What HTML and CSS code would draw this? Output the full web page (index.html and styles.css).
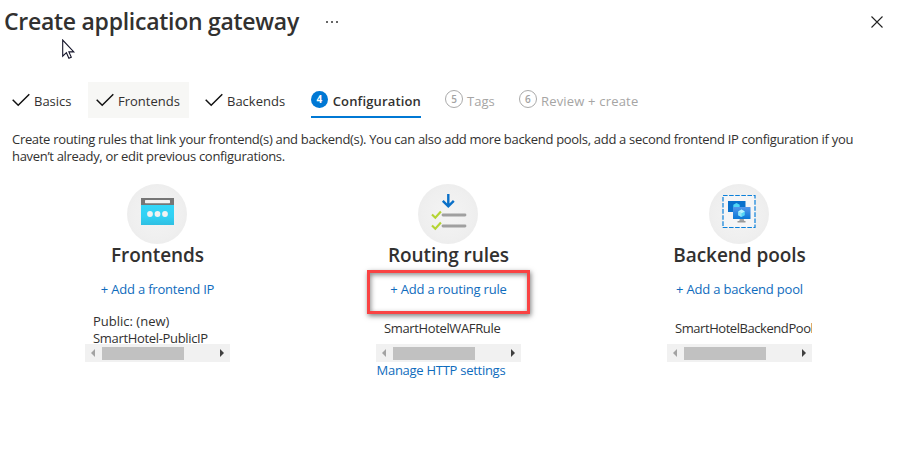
FILE: index.html
```
<!DOCTYPE html>
<html lang="en">
<head>
<meta charset="utf-8">
<title>Create application gateway</title>
<link rel="stylesheet" href="styles.css">
</head>
<body>
<header class="header">
  <h1 class="title">Create application gateway</h1>
  <span class="more"><i></i><i></i><i></i></span>
  <svg class="close" width="12" height="12" viewBox="0 0 12 12"><path d="M.5.5l11 11M11.5.5l-11 11" stroke="#222" stroke-width="1.1"/></svg>
</header>
<svg class="cursor" width="14" height="21" viewBox="0 0 14 21"><path d="M.7 1v16.2l3.7-3.5 2.5 5.6 2.4-1.1-2.4-5.3h4.9z" fill="#fff" stroke="#15152a" stroke-width="1.1"/></svg>

<nav class="tabs">
  <div class="tab basics"><svg class="check" width="18" height="14" viewBox="0 0 18 14"><path d="M.7 6.8l5.5 5.5L17.3 1.2" /></svg><span>Basics</span></div>
  <div class="tab hovered"><svg class="check" width="18" height="14" viewBox="0 0 18 14"><path d="M.7 6.8l5.5 5.5L17.3 1.2" /></svg><span>Frontends</span></div>
  <div class="tab backends"><svg class="check" width="18" height="14" viewBox="0 0 18 14"><path d="M.7 6.8l5.5 5.5L17.3 1.2" /></svg><span>Backends</span></div>
  <div class="tab active"><b class="num">4</b><span class="label">Configuration</span></div>
  <div class="tab pending tags"><b class="num">5</b><span>Tags</span></div>
  <div class="tab pending review"><b class="num">6</b><span class="label">Review + create</span></div>
</nav>

<p class="intro">Create routing rules that link your frontend(s) and backend(s). You can also add more backend pools, add a second frontend IP configuration if you<br>haven’t already, or edit previous configurations.</p>

<main class="columns">
  <section class="column">
    <div class="disc">
      <svg width="60" height="60" viewBox="0 0 60 60">
        <defs><linearGradient id="cyan" x1="0" y1="0" x2="0" y2="1"><stop offset="0" stop-color="#33d6f8"/><stop offset=".6" stop-color="#32d0f3"/><stop offset="1" stop-color="#2fbfe2"/></linearGradient></defs>
        <path d="M14 14h33v7H14z" fill="#767676"/><path d="M14 21h33v20H14z" fill="url(#cyan)"/>
        <rect x="18" y="16" width="25" height="3.2" rx=".6" fill="#f2f2f2"/>
        <g fill="#f2f2f2"><circle cx="23" cy="30" r="2.9"/><circle cx="30.5" cy="30" r="2.9"/><circle cx="38" cy="30" r="2.9"/></g>
      </svg>
    </div>
    <h2 class="heading">Frontends</h2>
    <a class="link">+ Add a frontend IP</a>
    <div class="items two"><span>Public: (new)</span><span class="ip">SmartHotel-PublicIP</span></div>
    <div class="scrollbar"><i class="left"></i><i class="thumb"></i><i class="right"></i></div>
  </section>
  <section class="column">
    <div class="disc">
      <svg width="60" height="60" viewBox="0 0 60 60" fill="none">
        <path d="M30.3 10v12M24.8 16.8l5.5 5.5 5.5-5.5" stroke="#0a70c8" stroke-width="2.4"/>
        <path d="M25 31h22M25 42h22" stroke="#a0a0a0" stroke-width="2.8" stroke-linecap="round"/>
        <path d="M14 30.5l3.3 3.3 5.6-6.3M14 41.5l3.3 3.3 5.6-6.3" stroke="#b4d432" stroke-width="2.1"/>
      </svg>
    </div>
    <h2 class="heading">Routing rules</h2>
    <a class="link">+ Add a routing rule</a>
    <div class="highlight"></div>
    <div class="items"><span class="waf">SmartHotelWAFRule</span></div>
    <div class="scrollbar"><i class="left"></i><i class="thumb"></i><i class="right"></i></div>
    <a class="manage">Manage HTTP settings</a>
  </section>
  <section class="column">
    <div class="disc">
      <svg width="60" height="60" viewBox="0 0 60 60">
        <defs><linearGradient id="blue" x1="0" y1="0" x2="0" y2="1"><stop offset="0" stop-color="#5396eb"/><stop offset="1" stop-color="#0878d6"/></linearGradient></defs>
        <rect x="14" y="11.5" width="32" height="32" fill="#f5f5f6" stroke="#0b80da" stroke-width="1.2" stroke-dasharray="4.6 1.5"/>
        <path d="M19 17h17.5v11H19z" fill="#0870cc"/>
        <path d="M27.5 19l3.2 1.8v4l-3.2 1.7-3.2-1.7v-4z" fill="#50d5f4"/>
        <path d="M31 34h3.5l1 4H30z" fill="#a3a3a3"/><path d="M28.5 37h8v1.5h-8z" fill="#999"/>
        <rect x="24" y="23" width="17.5" height="12" rx=".6" fill="url(#blue)"/>
        <path d="M32.5 25.5l3.3 1.9v3.9L32.500 33l-3.300-1.700v-3.900z" fill="#55d5f5"/><path d="M32.500 25.500l3.300 1.900-3.300 1.800-3.300-1.800z" fill="#b8f1fc"/><path d="M29.200 27.400l3.300 1.800V33l-3.300-1.700z" fill="#91e4f8"/>
      </svg>
    </div>
    <h2 class="heading">Backend pools</h2>
    <a class="link">+ Add a backend pool</a>
    <div class="items"><span class="pool">SmartHotelBackendPool</span></div>
    <div class="scrollbar"><i class="left"></i><i class="thumb"></i><i class="right"></i></div>
  </section>
</main>
</body>
</html>
```
FILE: styles.css
```
* { box-sizing: border-box; }
body {
  margin: 0;
  height: 462px;
  overflow: hidden;
  background: #fff;
  color: #323130;
  font: 13px/17px "Open Sans", "Noto Sans", sans-serif;
  white-space: nowrap;
}
.header { display: flex; align-items: center; height: 44px; padding: 0 25px 0 4px; }
.title { margin: 0; width: 322px; font-size: 23px; line-height: 30px; padding-bottom: 2px; font-weight: 550; letter-spacing: -0.27px; }
.more { display: flex; gap: 3px; }
.more i { width: 2px; height: 2px; background: #666; }
.close { margin-left: auto; }
.cursor { position: absolute; left: 62px; top: 39px; }

.tabs { display: flex; height: 36px; margin: 38px 0 0 12px; }
.tab { display: flex; align-items: center; height: 36px; padding-top: 2px; }
.check { margin: -3px 4px 0 0; fill: none; stroke: #111; stroke-width: 1.5; }
.basics { width: 76px; }
.hovered { width: 101px; padding-left: 8px; background: #f7f7f5; }
.backends { width: 122px; padding-left: 16px; }
.active { width: 110px; border-bottom: 2px solid #0078d4; font-weight: 550; padding-top: 4px; letter-spacing: 0.15px; }
.num {
  display: flex; align-items: center; justify-content: center;
  width: 17px; height: 17px; margin: -4px 5px 0 0; border-radius: 50%;
  background: #0078d4; color: #fff; font-size: 10px; line-height: 17px; font-weight: 700;
}
.pending { color: #a6a5a4; }
.pending .num { width: 18px; height: 18px; margin-right: 4px; background: none; border: 1px solid #aaa; color: #a3a3a3; font-weight: 600; }
.tags { margin-left: 24px; width: 74px; }
.review { letter-spacing: 0.18px; }

.intro { margin: 13px 0 0 12px; letter-spacing: -0.31px; }

.columns { display: grid; grid-template-columns: 291px 291px 291px; margin: 19px 0 0 11.5px; }
.column { position: relative; display: flex; flex-direction: column; align-items: center; }
.disc { width: 60px; height: 60px; border-radius: 50%; background: radial-gradient(circle, #f4f4f4 0%, #efefef 60%, #e9e9e9 100%); }
.disc svg { display: block; }
.heading { margin: -2px 0 0 1px; font-size: 19px; line-height: 26px; font-weight: 550; letter-spacing: -0.06px; }
.link, .manage { color: #0f6cbd; }
.link { margin: 13px 0 0 1px; letter-spacing: -0.19px; }
.items { display: flex; flex-direction: column; width: 145px; height: 45px; margin-top: 1px; padding: 21px 0 0 8.5px; overflow: hidden; }
.two { padding-top: 14px; }
.items span { flex: none; }
.ip { letter-spacing: -0.33px; }
.waf { letter-spacing: -0.36px; }
.pool { letter-spacing: -0.44px; }
.scrollbar { display: flex; align-items: center; justify-content: space-between; width: 145px; height: 18px; background: #f1f1f1; padding: 0 6px 0 6px; }
.scrollbar .left { border: 4px solid transparent; border-left: 0; border-right-color: #a3a3a3; }
.scrollbar .right { border: 4px solid transparent; border-right: 0; border-left-color: #404040; }
.scrollbar .thumb { width: 82px; height: 13px; margin-right: 29px; background: #c1c1c1; }
.manage { width: 145px; padding-left: 1px; letter-spacing: -0.27px; }
.highlight {
  position: absolute; left: 64.5px; top: 86px; width: 163px; height: 44px;
  border: 3px solid #f94343;
  box-shadow: 1px 2px 5px rgba(0,0,0,.5), inset 1px 2px 5px rgba(0,0,0,.45);
}
```
